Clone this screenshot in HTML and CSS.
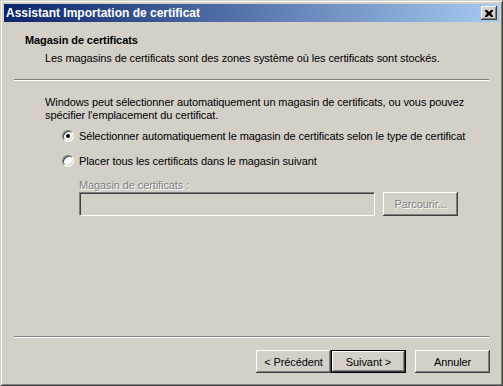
FILE: index.html
```html
<!DOCTYPE html>
<html lang="fr">
<head>
    <meta charset="UTF-8">
    <title>Assistant Importation de certificat</title>
    <link rel="stylesheet" href="styles.css">
</head>
<body>
    <div class="window">
        <div class="titlebar">
            <span class="title">Assistant Importation de certificat</span>
            <button class="close-btn">
                <svg width="8" height="7" viewBox="0 0 8 7">
                    <path d="M0 0h2l2 2 2-2h2v1l-2 2.5 2 2.5v1h-2l-2-2-2 2h-2v-1l2-2.5-2-2.5z" fill="#000"/>
                </svg>
            </button>
        </div>

        <div class="header">
            <h1>Magasin de certificats</h1>
            <p>Les magasins de certificats sont des zones système où les certificats sont stockés.</p>
        </div>
        <div class="separator"></div>

        <div class="content">
            <p class="intro">Windows peut sélectionner automatiquement un magasin de certificats, ou vous pouvez spécifier l'emplacement du certificat.</p>

            <label class="radio-row">
                <span class="radio checked"></span>
                <span>Sélectionner automatiquement le magasin de certificats selon le type de certificat</span>
            </label>
            <label class="radio-row">
                <span class="radio"></span>
                <span>Placer tous les certificats dans le magasin suivant</span>
            </label>

            <div class="store-group">
                <div class="disabled-label">Magasin de certificats :</div>
                <div class="store-row">
                    <div class="textbox"></div>
                    <button class="btn disabled">Parcourir...</button>
                </div>
            </div>
        </div>

        <div class="separator"></div>
        <div class="footer">
            <button class="btn">&lt; Précédent</button>
            <button class="btn default">Suivant &gt;</button>
            <button class="btn cancel">Annuler</button>
        </div>
    </div>
</body>
</html>
```

FILE: styles.css
```css
body {
    margin: 0;
    background: #d4d0c8;
    font-family: 'Liberation Sans', Arial, sans-serif;
    font-size: 11px;
    letter-spacing: -0.1px;
    color: #000;
}

.window {
    width: 503px;
    height: 386px;
    box-sizing: border-box;
    background: #d4d0c8;
    border-top: 1px solid #d4d0c8;
    border-left: 1px solid #d4d0c8;
    border-right: 1px solid #404040;
    border-bottom: 1px solid #404040;
    box-shadow: inset 1px 1px 0 #fff, inset -1px -1px 0 #808080;
    padding: 3px;
    display: flex;
    flex-direction: column;
}

.titlebar {
    height: 18px;
    flex-shrink: 0;
    background: linear-gradient(to right, #0a246a, #a6caf0);
    display: flex;
    align-items: center;
    justify-content: space-between;
    padding: 0 2px 0 2px;
}

.title {
    color: #fff;
    font-weight: bold;
    font-size: 12px;
    letter-spacing: 0;
}

.close-btn {
    width: 16px;
    height: 14px;
    padding: 0;
    margin: 0;
    background: #d4d0c8;
    border: none;
    box-shadow: inset -1px -1px 0 #404040, inset 1px 1px 0 #fff, inset -2px -2px 0 #808080;
    display: flex;
    align-items: center;
    justify-content: center;
}

.header {
    padding: 12px 0 0 21px;
    height: 57px;
    flex-shrink: 0;
    box-sizing: border-box;
}

.header h1 {
    font-size: 11px;
    font-weight: bold;
    margin: 0 0 6px 0;
}

.header p {
    margin: 0 0 0 20px;
}

.separator {
    height: 0;
    flex-shrink: 0;
    margin: 0 10px 0 10px;
    border-top: 1px solid #808080;
    border-bottom: 1px solid #fff;
}

.content {
    flex: 1;
    padding: 15px 0 0 41px;
}

.intro {
    margin: 0 0 7px 0;
    line-height: 13px;
    width: 440px;
}

.radio-row {
    display: flex;
    align-items: center;
    gap: 5px;
    margin-left: 17px;
    height: 13px;
    margin-bottom: 12px;
}

.radio {
    width: 12px;
    height: 12px;
    border-radius: 50%;
    box-sizing: border-box;
    background: #fff;
    border: 1px solid;
    border-color: #808080 #fff #fff #808080;
    box-shadow: inset 1px 1px 0 #404040, inset -1px -1px 0 #d4d0c8;
    position: relative;
}

.radio.checked::after {
    content: "";
    position: absolute;
    left: 3px;
    top: 3px;
    width: 4px;
    height: 4px;
    border-radius: 50%;
    background: #000;
}

.store-group {
    margin-left: 34px;
    margin-top: 5px;
}

.disabled-label {
    color: #808080;
    text-shadow: 1px 1px 0 #fff;
    margin-bottom: 1px;
}

.store-row {
    display: flex;
    gap: 8px;
}

.textbox {
    width: 296px;
    height: 24px;
    box-sizing: border-box;
    background: #d4d0c8;
    border: 1px solid;
    border-color: #808080 #fff #fff #808080;
    box-shadow: inset 1px 1px 0 #404040;
}

.btn {
    width: 75px;
    height: 23px;
    padding: 0;
    font-family: 'Liberation Sans', Arial, sans-serif;
    font-size: 11px;
    letter-spacing: -0.1px;
    color: #000;
    background: #d4d0c8;
    border: none;
    box-shadow: inset -1px -1px 0 #404040, inset 1px 1px 0 #fff, inset -2px -2px 0 #808080;
}

.btn.disabled {
    color: #808080;
    text-shadow: 1px 1px 0 #fff;
    height: 24px;
}

.btn.default {
    box-shadow: inset 0 0 0 1px #000, inset -2px -2px 0 #404040, inset 2px 2px 0 #fff, inset -3px -3px 0 #808080;
}

.footer {
    display: flex;
    flex-shrink: 0;
    justify-content: flex-end;
    padding: 12px 9px 9px 0;
}

.btn.cancel {
    margin-left: 9px;
}
```
